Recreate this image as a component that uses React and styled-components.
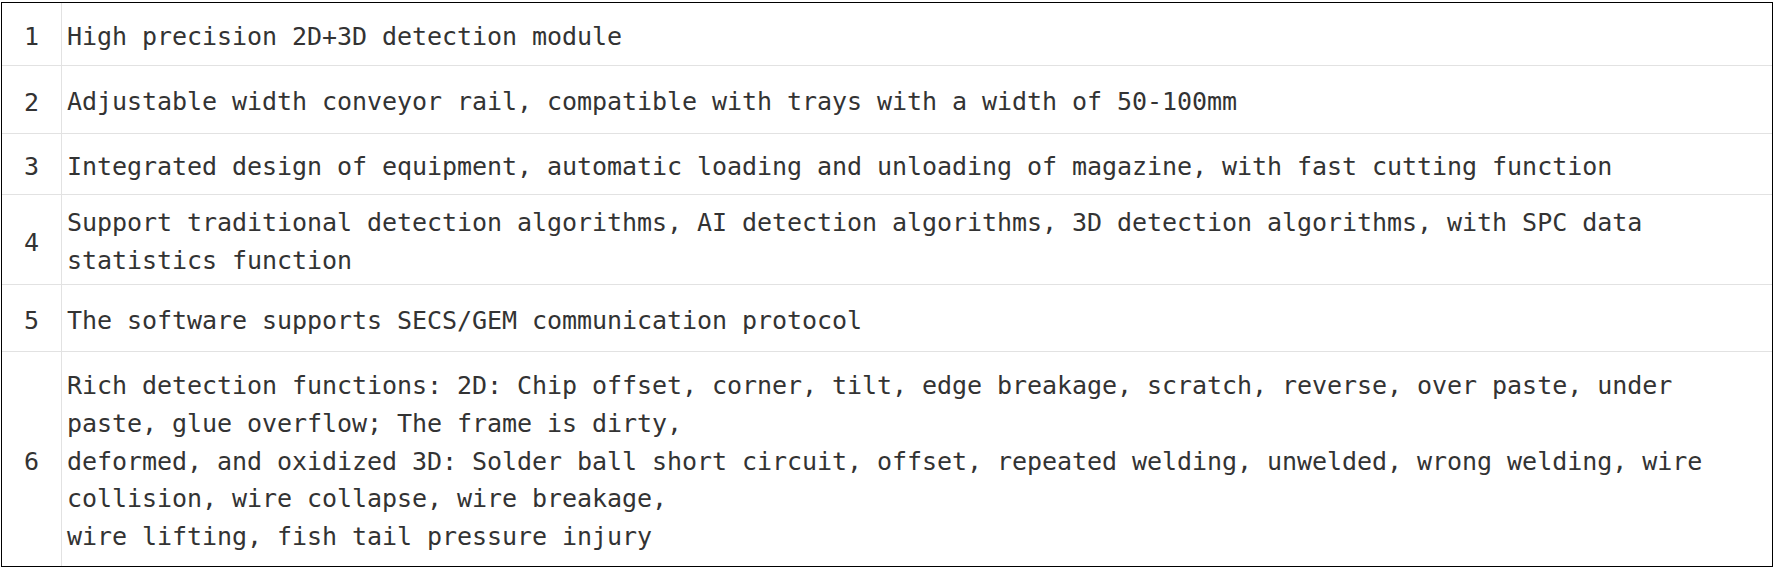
import React from 'react'
import styled, { createGlobalStyle } from 'styled-components'

const rows = [
  { n: 1, h: 62, lines: ['High precision 2D+3D detection module'] },
  { n: 2, h: 68, lines: ['Adjustable width conveyor rail, compatible with trays with a width of 50-100mm'] },
  { n: 3, h: 61, lines: ['Integrated design of equipment, automatic loading and unloading of magazine, with fast cutting function'] },
  { n: 4, h: 90, lines: ['Support traditional detection algorithms, AI detection algorithms, 3D detection algorithms, with SPC data statistics function'] },
  { n: 5, h: 67, lines: ['The software supports SECS/GEM communication protocol'] },
  {
    n: 6,
    h: 215,
    lines: [
      'Rich detection functions: 2D: Chip offset, corner, tilt, edge breakage, scratch, reverse, over paste, under paste, glue overflow; The frame is dirty,',
      'deformed, and oxidized 3D: Solder ball short circuit, offset, repeated welding, unwelded, wrong welding, wire collision, wire collapse, wire breakage,',
      'wire lifting, fish tail pressure injury'
    ]
  }
]

const GlobalStyle = createGlobalStyle`
  body {
    margin: 0;
    background: #fff;
  }
`

const Page = styled.div`
  padding: 2px 4px 0 1px;
`

const Table = styled.div`
  border: 1px solid #000;
  font-family: "DejaVu Sans Mono", monospace;
  font-size: 25px;
  letter-spacing: -0.05px;
  color: #333;
`

const Row = styled.div`
  display: grid;
  grid-template-columns: 60px 1fr;
  height: ${p => p.h}px;
  box-sizing: border-box;
  & + & {
    border-top: 1px solid #e2e2e2;
  }
`

const Num = styled.div`
  display: flex;
  align-items: center;
  justify-content: center;
  padding-top: 5px;
  border-right: 1px solid #e2e2e2;
`

const Text = styled.div`
  display: flex;
  flex-direction: column;
  justify-content: center;
  padding: 5px 10px 0 5px;
  line-height: 37.7px;
`

export default function App() {
  return (
    <Page>
      <GlobalStyle />
      <Table>
        {rows.map(r => (
          <Row key={r.n} h={r.h}>
            <Num>{r.n}</Num>
            <Text>
              {r.lines.map((l, i) => (
                <div key={i}>{l}</div>
              ))}
            </Text>
          </Row>
        ))}
      </Table>
    </Page>
  )
}
